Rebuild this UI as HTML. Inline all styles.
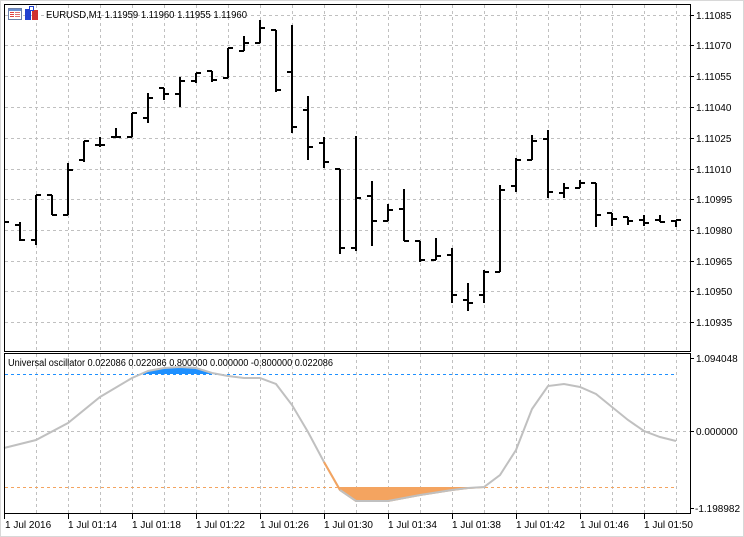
<!DOCTYPE html>
<html><head><meta charset="utf-8"><style>
html,body{margin:0;padding:0;background:#fff;}
svg{display:block;font-family:"Liberation Sans",sans-serif;font-size:10px;}
</style></head><body>
<svg width="744" height="537" viewBox="0 0 744 537" xmlns="http://www.w3.org/2000/svg">
<rect x="0" y="0" width="744" height="537" fill="#fff"/>
<rect x="0.5" y="0.5" width="743" height="536" fill="none" stroke="#d8d8d8"/>
<g stroke="#c0c0c0" stroke-width="1" stroke-dasharray="3,3" fill="none">
<path d="M36.5 5V351M68.5 5V351M100.5 5V351M132.5 5V351M164.5 5V351M196.5 5V351M228.5 5V351M260.5 5V351M292.5 5V351M324.5 5V351M356.5 5V351M388.5 5V351M420.5 5V351M452.5 5V351M484.5 5V351M516.5 5V351M548.5 5V351M580.5 5V351M612.5 5V351M644.5 5V351M676.5 5V351"/>
<path d="M5 15.5H690M5 45.5H690M5 76.5H690M5 107.5H690M5 138.5H690M5 169.5H690M5 199.5H690M5 230.5H690M5 261.5H690M5 291.5H690M5 322.5H690"/>
<path d="M36.5 354V513M68.5 354V513M100.5 354V513M132.5 354V513M164.5 354V513M196.5 354V513M228.5 354V513M260.5 354V513M292.5 354V513M324.5 354V513M356.5 354V513M388.5 354V513M420.5 354V513M452.5 354V513M484.5 354V513M516.5 354V513M548.5 354V513M580.5 354V513M612.5 354V513M644.5 354V513M676.5 354V513"/>
<path d="M5 431.5H690"/>
</g>
<path d="M5 374.5H676" stroke="#1e90ff" stroke-dasharray="3,3"/>
<path d="M5 487.5H676" stroke="#f4a460" stroke-dasharray="3,3"/>
<g stroke="#000" stroke-width="2" fill="none">
<path d="M4 222H9"/>
<path d="M20 222V241M15 225H20M20 240H25"/>
<path d="M36 195V245M31 240H36M36 195H41"/>
<path d="M52 195V215M47 195H52M52 215H57"/>
<path d="M68 163V215M63 215H68M68 170H73"/>
<path d="M84 141V162M79 160H84M84 141H89"/>
<path d="M100 137V147M95 145H100M100 145H105"/>
<path d="M116 128V137M111 137H116M116 137H121"/>
<path d="M132 113V137M127 137H132M132 113H137"/>
<path d="M148 93V123M143 118H148M148 98H153"/>
<path d="M164 88V100M159 88H164M164 94H169"/>
<path d="M180 77V107M175 94H180M180 81H185"/>
<path d="M196 73V83M191 81H196M196 73H201"/>
<path d="M212 71V82M207 71H212M212 80H217"/>
<path d="M228 48V78M223 78H228M228 48H233"/>
<path d="M244 36V51M239 51H244M244 43H249"/>
<path d="M260 20V43M255 43H260M260 28H265"/>
<path d="M276 30V92M271 30H276M276 90H281"/>
<path d="M292 25V133M287 72H292M292 127H297"/>
<path d="M308 96V160M303 110H308M308 147H313"/>
<path d="M324 137V168M319 143H324M324 162H329"/>
<path d="M340 169V254M335 169H340M340 248H345"/>
<path d="M356 136V251M351 248H356M356 198H361"/>
<path d="M372 181V246M367 196H372M372 221H377"/>
<path d="M388 204V221M383 221H388M388 210H393"/>
<path d="M404 189V241M399 209H404M404 241H409"/>
<path d="M420 241V262M415 241H420M420 260H425"/>
<path d="M436 238V260M431 260H436M436 256H441"/>
<path d="M452 248V303M447 255H452M452 295H457"/>
<path d="M468 283V311M463 300H468M468 303H473"/>
<path d="M484 270V303M479 295H484M484 272H489"/>
<path d="M500 185V272M495 272H500M500 190H505"/>
<path d="M516 158V192M511 186H516M516 160H521"/>
<path d="M532 135V160M527 160H532M532 141H537"/>
<path d="M548 130V198M543 139H548M548 192H553"/>
<path d="M564 183V198M559 193H564M564 188H569"/>
<path d="M580 180V188M575 188H580M580 183H585"/>
<path d="M596 183V227M591 183H596M596 215H601"/>
<path d="M612 213V226M607 213H612M612 219H617"/>
<path d="M628 217V225M623 217H628M628 221H633"/>
<path d="M644 215V226M639 220H644M644 223H649"/>
<path d="M660 215V222M655 220H660M660 222H665"/>
<path d="M676 220V227M671 221H676M676 220H681"/>
</g>
<defs>
<clipPath id="ca"><rect x="0" y="0" width="744" height="374"/></clipPath>
<clipPath id="cb"><rect x="0" y="487" width="744" height="40"/></clipPath>
</defs>
<path clip-path="url(#ca)" fill="#1e90ff" d="M100 374L132 378L148 371L164 368L180 367L196 368L212 373L228 376Z"/>
<path clip-path="url(#cb)" fill="#f4a460" stroke="#f4a460" stroke-width="2" d="M308 432L324 462L340 490L356 501L388 501L420 495L452 490L468 488L484 487L500 475Z"/>
<polyline fill="none" stroke="#c0c0c0" stroke-width="2" points="4,448 36,440 68,423 100,397 132,378 148,371 164,368 180,367 196,368 212,373 228,376 244,378 260,378 276,384 292,405 308,432 324,462 340,490 356,501 388,501 420,495 452,490 468,488 484,487 500,475 516,450 532,409 548,386 564,384 580,387 596,394 612,407 628,420 644,431 660,437 676,441"/>
<path d="M324 462L340 490" stroke="#f4a460" stroke-width="2" fill="none"/>
<rect x="4.5" y="4.5" width="686" height="347" fill="none" stroke="#000"/>
<rect x="4.5" y="353.5" width="686" height="160" fill="none" stroke="#000"/>
<g stroke="#000"><path d="M690 15.5h4M690 45.5h4M690 76.5h4M690 107.5h4M690 138.5h4M690 169.5h4M690 199.5h4M690 230.5h4M690 261.5h4M690 291.5h4M690 322.5h4M690 358.5h4M690 431.5h4M690 508.5h4"/>
<path d="M4.5 514v5M68.5 514v5M132.5 514v5M196.5 514v5M260.5 514v5M324.5 514v5M388.5 514v5M452.5 514v5M516.5 514v5M580.5 514v5M644.5 514v5"/></g>
<g fill="#000">
<text x="696" y="19">1.11085</text><text x="696" y="49">1.11070</text><text x="696" y="80">1.11055</text><text x="696" y="111">1.11040</text><text x="696" y="142">1.11025</text><text x="696" y="173">1.11010</text><text x="696" y="203">1.10995</text><text x="696" y="234">1.10980</text><text x="696" y="265">1.10965</text><text x="696" y="295">1.10950</text><text x="696" y="326">1.10935</text>
<text x="696" y="362">1.094048</text><text x="696" y="435">0.000000</text><text x="695" y="512">-1.198982</text>
<text x="5" y="528">1 Jul 2016</text><text x="68" y="528">1 Jul 01:14</text><text x="132" y="528">1 Jul 01:18</text><text x="196" y="528">1 Jul 01:22</text><text x="260" y="528">1 Jul 01:26</text><text x="324" y="528">1 Jul 01:30</text><text x="388" y="528">1 Jul 01:34</text><text x="452" y="528">1 Jul 01:38</text><text x="516" y="528">1 Jul 01:42</text><text x="580" y="528">1 Jul 01:46</text><text x="644" y="528">1 Jul 01:50</text>
<text x="46" y="18" textLength="201" lengthAdjust="spacingAndGlyphs">EURUSD,M1  1.11959 1.11960 1.11955 1.11960</text>
<text x="8" y="366" textLength="325" lengthAdjust="spacingAndGlyphs">Universal oscillator 0.022086 0.022086 0.800000 0.000000 -0.800000 0.022086</text>
</g>
<rect x="8.5" y="8.5" width="13" height="11" fill="#fff" stroke="#6b7fa8"/>
<rect x="9" y="9" width="12" height="2" fill="#6b8fd0"/>
<path d="M10 12.5h4M10 14.5h4M10 16.5h4" stroke="#e04040"/>
<path d="M15 12.5h5M15 14.5h5M15 16.5h5" stroke="#e07070"/>
<rect x="25" y="9" width="6" height="11" fill="#2040d0"/>
<rect x="32" y="10" width="6" height="10" fill="#d03030"/>
<rect x="29.5" y="6.5" width="4" height="4" fill="#fff" stroke="#2040d0"/>
</svg>
</body></html>
